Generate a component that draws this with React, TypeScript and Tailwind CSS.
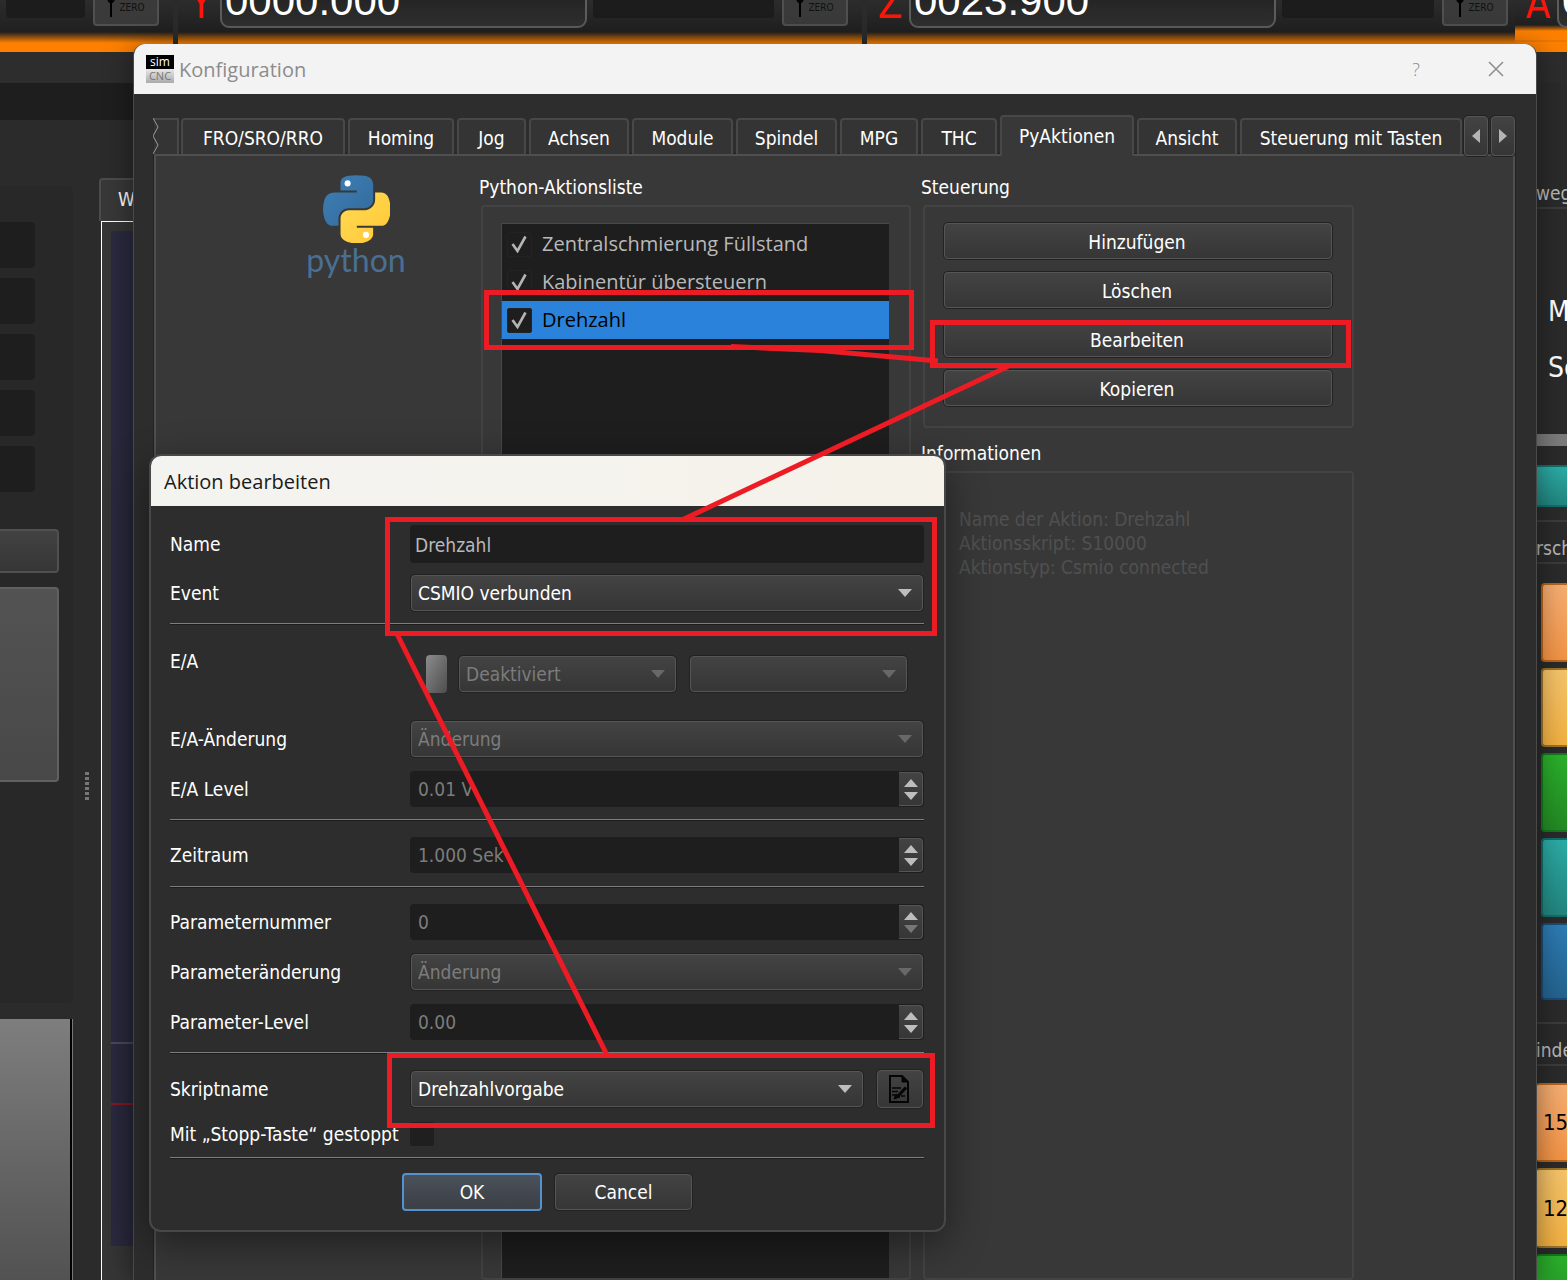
import { useState } from 'react'
import type { ReactNode } from 'react'
import clsx from 'clsx'

type Tab = { label: string; width: string }

const TABS: Tab[] = [
  { label: 'FRO/SRO/RRO', width: 'w-[164px]' },
  { label: 'Homing', width: 'w-[106px]' },
  { label: 'Jog', width: 'w-[69px]' },
  { label: 'Achsen', width: 'w-[100px]' },
  { label: 'Module', width: 'w-[101px]' },
  { label: 'Spindel', width: 'w-[101px]' },
  { label: 'MPG', width: 'w-[78px]' },
  { label: 'THC', width: 'w-[76px]' },
  { label: 'PyAktionen', width: 'w-[134px]' },
  { label: 'Ansicht', width: 'w-[100px]' },
  { label: 'Steuerung mit Tasten', width: 'w-[222px]' },
]

const ACTIONS = ['Zentralschmierung Füllstand', 'Kabinentür übersteuern', 'Drehzahl']

const raised =
  'rounded-[4px] border border-[#555] bg-linear-to-b from-[#434343] to-[#363636] shadow-[0_0_0_1px_#222]'

/* ---------- small drawings ---------- */

function Arrow({ dir, className }: { dir: 'up' | 'down' | 'left' | 'right'; className?: string }) {
  const points = {
    up: '7,0 14,8 0,8',
    down: '0,0 14,0 7,8',
    left: '8,0 8,14 0,7',
    right: '0,0 8,7 0,14',
  }
  const vertical = dir === 'up' || dir === 'down'
  return (
    <svg
      width={vertical ? 14 : 8}
      height={vertical ? 8 : 14}
      className={clsx('pointer-events-none', className)}
      aria-hidden="true"
    >
      <polygon points={points[dir]} fill="currentColor" />
    </svg>
  )
}

function PythonMark() {
  return (
    <svg width="67" height="68" viewBox="0 0 110 111" aria-hidden="true">
      <defs>
        <linearGradient id="pyBlue" x1="0" y1="0" x2="1" y2="1">
          <stop offset="0" stopColor="#3d7fb5" />
          <stop offset="1" stopColor="#346a9b" />
        </linearGradient>
        <linearGradient id="pyYellow" x1="0" y1="0" x2="1" y2="1">
          <stop offset="0" stopColor="#ffdb55" />
          <stop offset="1" stopColor="#ffc836" />
        </linearGradient>
      </defs>
      <path
        fill="url(#pyBlue)"
        d="M54.9 0C50.300 0 46 .4 42.100 1.100 30.800 3.100 28.700 7.300 28.700 15v10.200h26.800v3.400H18.700C10.900 28.600 4.100 33.300 2 42.100c-2.500 10.200-2.600 16.600 0 27.300 1.900 7.900 6.400 13.600 14.200 13.600h9.200V70.700c0-8.800 7.700-16.600 16.800-16.600h26.700c7.400 0 13.400-6.100 13.400-13.600V15c0-7.200-6.100-12.700-13.400-13.900C64.200.300 59.400 0 54.900 0z"
      />
      <path
        fill="url(#pyYellow)"
        d="M85.600 28.600v11.900c0 9.200-7.800 17-16.700 17H42.200c-7.300 0-13.400 6.300-13.400 13.600v25.500c0 7.300 6.300 11.500 13.400 13.600 8.500 2.500 16.600 3 26.700 0 6.700-2 13.400-5.900 13.400-13.600V86.400H55.500V83h40.200c7.800 0 10.700-5.400 13.400-13.600 2.800-8.400 2.700-16.500 0-27.300-1.900-7.700-5.600-13.600-13.400-13.600z"
      />
      <circle cx="40.400" cy="13.500" r="5" fill="#fff" />
      <circle cx="70.600" cy="98" r="5" fill="#fff" />
    </svg>
  )
}

function ScriptIcon() {
  return (
    <svg width="20" height="28" viewBox="0 0 20 28" fill="none" stroke="#050505" aria-hidden="true">
      <path d="M1 1h12l6 6v20H1z" strokeWidth="2" />
      <path d="M13 1v6h6z" fill="#050505" strokeWidth="1" />
      <path d="M3 13h9M3 16.500h6M3 20h3" strokeWidth="1.500" />
      <path d="M17 12.500L9 21" strokeWidth="3" />
      <path d="M5 24l2-5 4 3z" fill="#050505" />
      <path d="M12 21h4" strokeWidth="1.500" />
    </svg>
  )
}

function Check() {
  return (
    <svg width="16" height="18" viewBox="0 0 16 18" className="pointer-events-none absolute left-[4px] top-[3px]" aria-hidden="true">
      <path d="M1.500 9l5 7L14.500 1.500" fill="none" stroke="#b4b4b4" strokeWidth="2.600" />
    </svg>
  )
}

/* ---------- machine screen behind the dialogs ---------- */

interface AxisCellProps {
  axis?: string
  value?: string
  valueWidth?: string
  className: string
}

function AxisCell({ axis, value, valueWidth, className }: AxisCellProps) {
  return (
    <div className={clsx('flex h-[52px] shrink-0 items-start overflow-hidden', className)}>
      {axis && (
        <span className="-mt-[16px] w-[42px] shrink-0 pl-[4px] text-center text-[40px] leading-[40px] text-[#ff1408]">{axis}</span>
      )}
      {value && (
        <output
          className={clsx(
            "-mt-[22px] h-[50px] shrink-0 rounded-[9px] border-2 border-[#5c5c5c] bg-linear-to-b from-[#1c1c1c] to-[#303030] pl-[3px] font-['Liberation_Sans'] text-[42px] leading-[42px] text-white",
            valueWidth,
          )}
        >
          {value}
        </output>
      )}
      <div className="ml-[6px] h-[18px] min-w-0 flex-1 rounded-b bg-[#1c1c1c]" />
      <button
        type="button"
        className="ml-[8px] mr-[14px] flex h-[26px] w-[66px] shrink-0 items-start justify-center gap-1 rounded-b-[4px] border-2 border-t-0 border-[#505050] bg-[#3a3a3a] text-[10px] leading-[16px] text-[#111]"
      >
        <svg width="8" height="17" aria-hidden="true">
          <path d="M4 0v17M1 0l3 3 3-3" stroke="#000" strokeWidth="2" fill="none" />
        </svg>
        <span>ZERO</span>
      </button>
    </div>
  )
}

const cellGlow = 'bg-[linear-gradient(#2c2c2c,#202020_32px,#ff8000_43px)]'
const activeGlow = 'bg-[linear-gradient(#2c2c2c,#202020_25px,#ff8000_31px,#ff8000_40px,#d87008_41px,#ff8000_42px)]'

function LeftColumn() {
  return (
    <div className="flex w-[73px] shrink-0 flex-col">
      <div className="mt-[66px] flex h-[817px] flex-col rounded-r-md bg-[#282828] pr-[14px] pt-[36px]">
        <div className="flex flex-col gap-[10px] pr-[24px]">
          {[0, 1, 2, 3, 4].map((n) => (
            <div key={n} className="h-[46px] rounded-r bg-[#1e1e1e]" />
          ))}
        </div>
        <div className="mt-[37px] h-[44px] rounded-r border-2 border-l-0 border-[#505050] bg-linear-to-b from-[#424242] to-[#363636]" />
        <div className="mt-[14px] h-[195px] rounded-r border-2 border-l-0 border-[#606060] bg-linear-to-b from-[#535353] to-[#484848]" />
      </div>
      <div className="mt-[16px] flex-1 border-r border-[#777] bg-black pr-[2px]">
        <div className="h-full bg-linear-to-b from-[#7e7e7e] to-[#525252]" />
      </div>
    </div>
  )
}

function PathView() {
  return (
    <div className="ml-[10px] flex min-w-0 flex-1 flex-col pt-[58px]">
      <div className="h-[43px] w-[120px] rounded-t border-2 border-b-0 border-[#4c4c4c] bg-[#383838] pl-[17px] text-[19px] leading-[38px] text-white">
        W
      </div>
      <div className="ml-[2px] flex-1 border-l border-t border-white bg-[#363636] pl-[9px] pt-[9px]">
        <div className="h-[1015px] bg-[#2b2a3f]">
          <div className="h-[813px] border-b-2 border-[#4a4a5c]" />
          <div className="h-[61px] border-b-2 border-[#8a1822]" />
        </div>
      </div>
    </div>
  )
}

function SideTitle({ children }: { children: ReactNode }) {
  return <div className="h-[44px] border-y-2 border-[#3c3c3c] text-[19px] leading-[52px] text-[#b9b9b9]">{children}</div>
}

const sideKey = 'block shrink-0 rounded-l-[4px] border-2 border-r-0 bg-linear-to-b text-left text-[22px] text-black'
const orange = 'border-[#b96418] from-[#f7ae72] to-[#f39343]'
const yellow = 'border-[#9a7428] from-[#f6c46a] to-[#f2b040]'
const green = 'border-[#147a1c] from-[#2bb02b] to-[#238a24]'
const teal = 'border-[#10706c] from-[#2caca6] to-[#22857e]'
const blue = 'border-[#1a4c78] from-[#2d7cb4] to-[#24638f]'

function RightColumn() {
  return (
    <div className="flex w-[31px] shrink-0 flex-col overflow-hidden whitespace-nowrap">
      <div className="mt-[57px] h-[32px] border-b-2 border-[#3c3c3c] text-[19px] leading-[32px] text-[#b9b9b9]">weg</div>
      <div className="mt-[75px] flex flex-col pl-[12px] text-[28px] leading-[56px] text-white">
        <span>M</span>
        <span>So</span>
      </div>
      <div className="mt-[38px] h-[12px] shrink-0 bg-[#7c7c7c]" />
      <button type="button" aria-label="Start" className={clsx('mt-[19px] h-[42px] shrink-0 border-y-2 bg-linear-to-b', teal)} />
      <div className="mt-[13px]">
        <SideTitle>rsch</SideTitle>
      </div>
      <div className="mt-[19px] flex flex-col gap-[6px] pl-[5px]">
        <button type="button" aria-label="100%" className={clsx(sideKey, orange, 'h-[79px]')} />
        <button type="button" aria-label="75%" className={clsx(sideKey, yellow, 'h-[79px]')} />
        <button type="button" aria-label="50%" className={clsx(sideKey, green, 'h-[79px]')} />
        <button type="button" aria-label="25%" className={clsx(sideKey, teal, 'h-[79px]')} />
        <button type="button" aria-label="0%" className={clsx(sideKey, blue, 'h-[77px]')} />
      </div>
      <div className="mt-[22px]">
        <SideTitle>inde</SideTitle>
      </div>
      <div className="mt-[17px] flex flex-col gap-[6px]">
        <button type="button" className={clsx(sideKey, orange, 'h-[79px] rounded-none border-l-0 pl-[7px]')}>15</button>
        <button type="button" className={clsx(sideKey, yellow, 'h-[80px] rounded-none border-l-0 pl-[7px]')}>12</button>
        <button type="button" aria-label="Spindel" className={clsx(sideKey, green, 'h-[79px] rounded-none border-l-0')} />
      </div>
    </div>
  )
}

function MachineScreen() {
  return (
    <div className="flex h-full flex-col bg-[#2b2b2b]">
      <div className="flex shrink-0 gap-[5px] overflow-hidden">
        <AxisCell className={clsx(cellGlow, 'w-[173px]')} />
        <AxisCell axis="Y" value="0000.000" valueWidth="w-[367px]" className={clsx(cellGlow, 'w-[684px]')} />
        <AxisCell axis="Z" value="0023.900" valueWidth="w-[367px]" className={clsx(cellGlow, 'w-[655px]')} />
        <AxisCell axis="A" value="0000.000" valueWidth="w-[367px]" className={clsx(activeGlow, '-ml-[12px] w-[684px] rounded-bl-lg')} />
      </div>
      <div className="h-[31px] shrink-0 bg-[#2d2d2d]" />
      <div className="flex h-[37px] shrink-0 bg-[#1e1e1e]">
        <div className="ml-auto w-[31px] bg-[#2b2b2b]" />
      </div>
      <div className="flex min-h-0 flex-1">
        <LeftColumn />
        <div className="flex w-[16px] shrink-0 flex-col gap-[2px] pl-[12px] pt-[652px]">
          {[0, 1, 2, 3, 4, 5].map((n) => (
            <span key={n} className="h-[3px] w-[4px] bg-[#777]" />
          ))}
        </div>
        <PathView />
        <RightColumn />
      </div>
    </div>
  )
}

/* ---------- configuration dialog ---------- */

function Group({ title, className, children }: { title: string; className?: string; children?: ReactNode }) {
  return (
    <section className={clsx('flex flex-col', className)}>
      <h2 className="h-[24px] text-[19px] leading-[24px] text-white">{title}</h2>
      <div className="ml-[2px] mt-[6px] flex-1 rounded-[4px] border-2 border-[#434343] pl-[18px] pr-[20px] pt-[16px]">
        {children}
      </div>
    </section>
  )
}

function ConfigDialog() {
  const [active, setActive] = useState('PyAktionen')
  const [selected, setSelected] = useState('Drehzahl')

  return (
    <div
      role="dialog"
      aria-label="Konfiguration"
      className="absolute bottom-0 left-[133px] right-[30px] top-[44px] flex flex-col overflow-hidden rounded-t-[12px] border-x border-[#4a4a4a] bg-[#2d2d2d] shadow-[0_4px_30px_rgba(0,0,0,0.450)]"
    >
      <header className="flex h-[50px] shrink-0 items-center bg-[#f3f3f3] pl-[12px] pr-[30px] font-['Open_Sans'] text-[20px] text-[#8c8c8c]">
        <div className="mr-[5px] flex h-[28px] w-[28px] flex-col overflow-hidden text-center text-[12px] leading-[14px]">
          <span className="h-[14px] bg-black text-white">sim</span>
          <span className="h-[14px] bg-linear-to-b from-[#e8e8e8] to-[#aaa] text-[11px] text-[#777]">CNC</span>
        </div>
        <h1 className="flex-1 pt-[2px]">Konfiguration</h1>
        <button type="button" className="mr-[60px] w-[20px] text-[18px] font-light">?</button>
        <button type="button" aria-label="Schließen" className="flex w-[20px] justify-center">
          <svg width="16" height="16" stroke="#8c8c8c" strokeWidth="1.500" aria-hidden="true">
            <path d="M1 1l14 14M15 1L1 15" />
          </svg>
        </button>
      </header>

      <div className="flex min-h-0 flex-1 flex-col pl-[20px] pr-[21px] pt-[21px]">
        <div className="flex h-[39px] shrink-0 items-end gap-[2px]">
          <div className="relative h-[36px] w-[25px] border-r-2 border-t-2 border-[#484848] bg-[#343434]">
            <svg width="9" height="36" className="absolute -left-[1px] -top-[2px]" aria-hidden="true">
              <path d="M0 0l5 9-5 9 5 9-5 9" fill="none" stroke="#9c9c9c" />
            </svg>
          </div>
          <div role="tablist" className="flex min-w-0 items-end gap-[3px]">
            {TABS.map((tab) => (
              <button
                key={tab.label}
                type="button"
                role="tab"
                aria-selected={active === tab.label}
                onClick={() => setActive(tab.label)}
                className={clsx(
                  'relative shrink-0 whitespace-nowrap rounded-t-[4px] border-2 border-b-0 border-[#484848] text-center text-[19px] text-white',
                  tab.width,
                  active === tab.label ? 'z-10 -mb-[2px] h-[41px] bg-[#383838]' : 'h-[36px] bg-[#343434] pt-[2px]',
                )}
              >
                {tab.label}
              </button>
            ))}
          </div>
          <div className="z-10 -mb-[2px] flex shrink-0 gap-[3px] text-[#b4b4b4]">
            <button type="button" aria-label="Zurück" className={clsx(raised, 'flex h-[40px] w-[24px] items-center justify-center')}>
              <Arrow dir="left" />
            </button>
            <button type="button" aria-label="Weiter" className={clsx(raised, 'flex h-[40px] w-[24px] items-center justify-center')}>
              <Arrow dir="right" />
            </button>
          </div>
        </div>

        <div className="flex min-h-0 flex-1 border-2 border-b-0 border-[#4f4f4f] bg-[#383838] pt-[19px] shadow-[0_0_0_1px_#222]">
          <div className="flex w-[323px] shrink-0 flex-col items-center pl-[77px]">
            <PythonMark />
            <span className="font-['Lato'] text-[32px] leading-[34px] text-[#4a6f93]">python</span>
          </div>

          <Group title="Python-Aktionsliste" className="w-[432px] shrink-0">
            <ul className="h-full border-l border-t border-[#484848] bg-[#1e1e1e] pt-[1px] font-['Open_Sans'] text-[20px]">
              {ACTIONS.map((name) => (
                <li
                  key={name}
                  onClick={() => setSelected(name)}
                  className={clsx(
                    'flex h-[38px] items-center pl-[5px]',
                    selected === name ? 'bg-[#2a82da] text-black' : 'text-[#b9b9b9]',
                  )}
                >
                  <label className="flex items-center gap-[10px]">
                    <span className="relative block h-[25px] w-[25px]">
                      <input
                        type="checkbox"
                        defaultChecked
                        className="block h-[25px] w-[25px] appearance-none rounded-[2px] border border-[#232323] bg-[#1e1e1e]"
                      />
                      <Check />
                    </span>
                    {name}
                  </label>
                </li>
              ))}
            </ul>
          </Group>

          <div className="ml-[10px] flex w-[433px] shrink-0 flex-col">
            <Group title="Steuerung" className="h-[253px] shrink-0">
              <div className="flex flex-col gap-[13px] pl-[1px]">
                {['Hinzufügen', 'Löschen', 'Bearbeiten', 'Kopieren'].map((text) => (
                  <button key={text} type="button" className={clsx(raised, 'h-[36px] pr-[2px] pt-[2px] text-[19px] text-white')}>
                    {text}
                  </button>
                ))}
              </div>
            </Group>
            <Group title="Informationen" className="mt-[13px] flex-1">
              <div className="ml-[16px] mt-[18px] text-[19px] leading-[24px] text-[#505050]">
                <p>Name der Aktion: Drehzahl</p>
                <p>Aktionsskript: S10000</p>
                <p>Aktionstyp: Csmio connected</p>
              </div>
            </Group>
          </div>
        </div>
      </div>
    </div>
  )
}

/* ---------- edit dialog ---------- */

interface DropdownProps {
  id: string
  options: string[]
  disabled?: boolean
  className?: string
  label?: string
}

function Dropdown({ id, options, disabled, className, label }: DropdownProps) {
  return (
    <div className={clsx('relative', className)}>
      <select
        id={id}
        disabled={disabled}
        aria-label={label}
        className={clsx(
          raised,
          'block h-[36px] w-full appearance-none pl-[6px] pr-8 pt-[1px] text-[19px] opacity-100',
          disabled ? 'text-[#7c7c7c]' : 'text-white',
        )}
      >
        {options.map((option) => (
          <option key={option}>{option}</option>
        ))}
      </select>
      <Arrow dir="down" className={clsx('absolute right-[11px] top-[14px]', disabled ? 'text-[#686868]' : 'text-[#bdbdbd]')} />
    </div>
  )
}

function SpinBox({ id, value, atMin }: { id: string; value: string; atMin?: boolean }) {
  return (
    <div className="flex h-[36px] flex-1 rounded-[4px] bg-[#1e1e1e] pr-[1px]">
      <input
        id={id}
        disabled
        defaultValue={value}
        className="min-w-0 flex-1 bg-transparent pl-[8px] pt-[1px] text-[19px] text-[#7c7c7c]"
      />
      <div className="my-[1px] flex w-[24px] flex-col items-center justify-center gap-[5px] rounded-r-[4px] border border-l-0 border-[#555] bg-linear-to-b from-[#434343] to-[#363636] text-[#bdbdbd]">
        <button type="button" aria-label="Erhöhen">
          <Arrow dir="up" className="block" />
        </button>
        <button type="button" aria-label="Verringern" className={clsx(atMin && 'text-[#777]')}>
          <Arrow dir="down" className="block" />
        </button>
      </div>
    </div>
  )
}

function Row({ label, htmlFor, className, children }: { label: string; htmlFor: string; className?: string; children: ReactNode }) {
  return (
    <div className={clsx('flex items-center', className ?? 'h-[38px]')}>
      <label htmlFor={htmlFor} className="w-[240px] shrink-0 whitespace-nowrap leading-[24px] text-white">
        {label}
      </label>
      {children}
    </div>
  )
}

function Divider({ className }: { className?: string }) {
  return <hr className={clsx('h-[2px] border-0 border-t border-[#7d7d7d] bg-[#1c1c1c]', className)} />
}

function EditDialog() {
  return (
    <form
      aria-label="Aktion bearbeiten"
      onSubmit={(e) => e.preventDefault()}
      className="absolute left-[149px] top-[454px] w-[797px] overflow-hidden rounded-[12px] border-2 border-[#484848] bg-[#2d2d2d] text-[19px] shadow-[0_12px_40px_rgba(0,0,0,0.450)]"
    >
      <h2 className="h-[50px] bg-linear-to-r from-[#f3f3f0] to-[#f6f2ea] pl-[13px] font-['Open_Sans'] text-[20px] leading-[52px] text-[#1a1a1a]">
        Aktion bearbeiten
      </h2>
      <div className="pb-[19px] pl-[19px] pr-[20px] pt-[19px]">
        <Row label="Name" htmlFor="name">
          <input
            id="name"
            defaultValue="Drehzahl"
            className="h-[38px] min-w-0 flex-1 rounded-[4px] bg-[#1e1e1e] pl-[5px] pt-[2px] text-[#b9b9b9]"
          />
        </Row>
        <div className="h-[11px]" />
        <Row label="Event" htmlFor="event">
          <Dropdown id="event" options={['CSMIO verbunden']} className="mx-px flex-1" />
        </Row>
        <Divider className="mb-[24px] mt-[11px]" />

        <div className="flex h-[50px] items-start">
          <label htmlFor="io" className="w-[256px] shrink-0 leading-[24px] text-white">E/A</label>
          <div className="flex h-full items-center">
            <div className="mr-[12px] h-[38px] w-[21px] rounded-[4px] bg-linear-to-br from-[#8c8c8c] to-[#4e4e4e]" />
            <Dropdown id="io" options={['Deaktiviert']} disabled className="mr-[14px] w-[217px]" />
            <Dropdown id="ioPin" label="E/A Pin" options={['']} disabled className="w-[217px]" />
          </div>
        </div>
        <div className="mt-[21px] flex flex-col gap-[12px]">
          <Row label="E/A-Änderung" htmlFor="ioChange">
            <Dropdown id="ioChange" options={['Änderung']} disabled className="mx-px flex-1" />
          </Row>
          <Row label="E/A Level" htmlFor="ioLevel">
            <SpinBox id="ioLevel" value="0.01 V" />
          </Row>
        </div>
        <Divider className="mb-[15px] mt-[11px]" />

        <Row label="Zeitraum" htmlFor="period">
          <SpinBox id="period" value="1.000 Sek" />
        </Row>
        <Divider className="mb-[15px] mt-[12px]" />

        <div className="flex flex-col gap-[12px]">
          <Row label="Parameternummer" htmlFor="paramNo">
            <SpinBox id="paramNo" value="0" atMin />
          </Row>
          <Row label="Parameteränderung" htmlFor="paramChange">
            <Dropdown id="paramChange" options={['Änderung']} disabled className="mx-px flex-1" />
          </Row>
          <Row label="Parameter-Level" htmlFor="paramLevel">
            <SpinBox id="paramLevel" value="0.00" />
          </Row>
        </div>
        <Divider className="mb-[15px] mt-[11px]" />

        <Row label="Skriptname" htmlFor="script" className="h-[40px]">
          <Dropdown id="script" options={['Drehzahlvorgabe']} className="ml-px mr-[14px] flex-1" />
          <button type="button" aria-label="Skript bearbeiten" className={clsx(raised, 'mr-px flex h-[38px] w-[46px] items-center justify-center pr-[2px]')}>
            <ScriptIcon />
          </button>
        </Row>
        <Row label="Mit „Stopp-Taste“ gestoppt" htmlFor="stop" className="mt-[12px] h-[26px]">
          <input id="stop" type="checkbox" className="h-[24px] w-[24px] appearance-none rounded-[2px] bg-[#1f1f1f]" />
        </Row>
        <Divider className="mb-[14px] mt-[10px]" />

        <div className="flex items-center justify-center gap-[13px] text-white">
          <button
            type="submit"
            className="h-[38px] w-[140px] rounded-[4px] border-2 border-[#5591cf] bg-linear-to-b from-[#4b515a] to-[#3b3f46] pt-[1px]"
          >
            OK
          </button>
          <button type="button" className={clsx(raised, 'h-[36px] w-[137px] pt-[1px]')}>
            Cancel
          </button>
        </div>
      </div>
    </form>
  )
}

/* Red frames and connecting lines drawn on top of both dialogs */
function Annotations() {
  return (
    <svg
      width="1567"
      height="1280"
      className="pointer-events-none absolute left-0 top-0"
      fill="none"
      stroke="#ed1c24"
      strokeWidth="5"
      aria-hidden="true"
    >
      <rect x="486.500" y="292.500" width="425" height="55" />
      <rect x="932.500" y="322.500" width="416" height="43" />
      <rect x="387.500" y="519.500" width="547" height="114" />
      <rect x="389.500" y="1055.500" width="543" height="70" />
      <path d="M731 346.500l89 4 118 10.500" />
      <path d="M1008 366.500L684 519" />
      <path d="M397 634l210 421" />
    </svg>
  )
}

export default function App() {
  return (
    <main className="relative h-screen w-full overflow-hidden bg-[#2b2b2b] font-['DejaVu_Sans_Condensed','Noto_Sans',sans-serif]">
      <MachineScreen />
      <ConfigDialog />
      <EditDialog />
      <Annotations />
    </main>
  )
}
